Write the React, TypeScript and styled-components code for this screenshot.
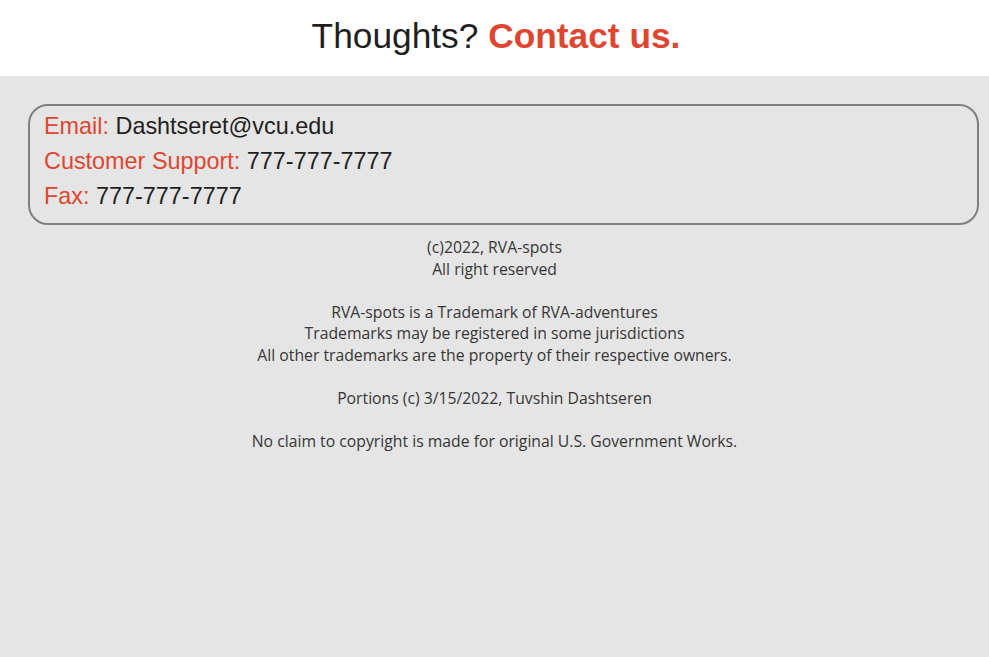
import React from "react";
import styled, { createGlobalStyle } from "styled-components";

const Global = createGlobalStyle`
  html, body { margin: 0; padding: 0; background: #e5e5e5; }
  body { font-family: "Liberation Sans", Arial, sans-serif; }
  #root { min-height: 100vh; }
`;

const Page = styled.div`
  min-height: 100vh;
  background: #e5e5e5;
`;

const Header = styled.header`
  height: 76px;
  background: #ffffff;
  display: flex;
  align-items: center;
  justify-content: center;
  box-sizing: border-box;
  padding-bottom: 4px;
  padding-left: 3px;
`;

const Title = styled.h1`
  margin: 0;
  font-family: "Liberation Sans", Arial, sans-serif;
  font-size: 35.3px;
  font-weight: 400;
  color: #1f1f1f;
`;

const Accent = styled.span`
  color: #de4631;
  font-weight: 700;
`;

const Main = styled.main`
  padding: 28px 10px 0 28px;
`;

const ContactCard = styled.section`
  border: 2px solid #808080;
  border-radius: 20px;
  padding: 3px 14px 9px 14px;
  display: flex;
  flex-direction: column;
`;

const ContactRow = styled.div`
  font-family: "Liberation Sans", Arial, sans-serif;
  font-size: 23.4px;
  line-height: 35px;
  color: #1f1f1f;
`;

const Label = styled.span`
  color: #de4631;
`;

const Footer = styled.footer`
  margin-top: 12px;
  margin-left: -28px;
  margin-right: -10px;
  display: flex;
  flex-direction: column;
  align-items: center;
  gap: 21.5px;
  font-family: "Open Sans", sans-serif;
  font-size: 15.75px;
  line-height: 21.5px;
  color: #363636;
  text-align: center;
`;

const Para = styled.p`
  margin: 0;
`;

export default function App() {
  return (
    <Page>
      <Global />
      <Header>
        <Title>
          Thoughts? <Accent>Contact us.</Accent>
        </Title>
      </Header>
      <Main>
        <ContactCard>
          <ContactRow>
            <Label>Email:</Label> Dashtseret@vcu.edu
          </ContactRow>
          <ContactRow>
            <Label>Customer Support:</Label> 777-777-7777
          </ContactRow>
          <ContactRow>
            <Label>Fax:</Label> 777-777-7777
          </ContactRow>
        </ContactCard>
        <Footer>
          <Para>
            (c)2022, RVA-spots
            <br />
            All right reserved
          </Para>
          <Para>
            RVA-spots is a Trademark of RVA-adventures
            <br />
            Trademarks may be registered in some jurisdictions
            <br />
            All other trademarks are the property of their respective owners.
          </Para>
          <Para>Portions (c) 3/15/2022, Tuvshin Dashtseren</Para>
          <Para>No claim to copyright is made for original U.S. Government Works.</Para>
        </Footer>
      </Main>
    </Page>
  );
}
